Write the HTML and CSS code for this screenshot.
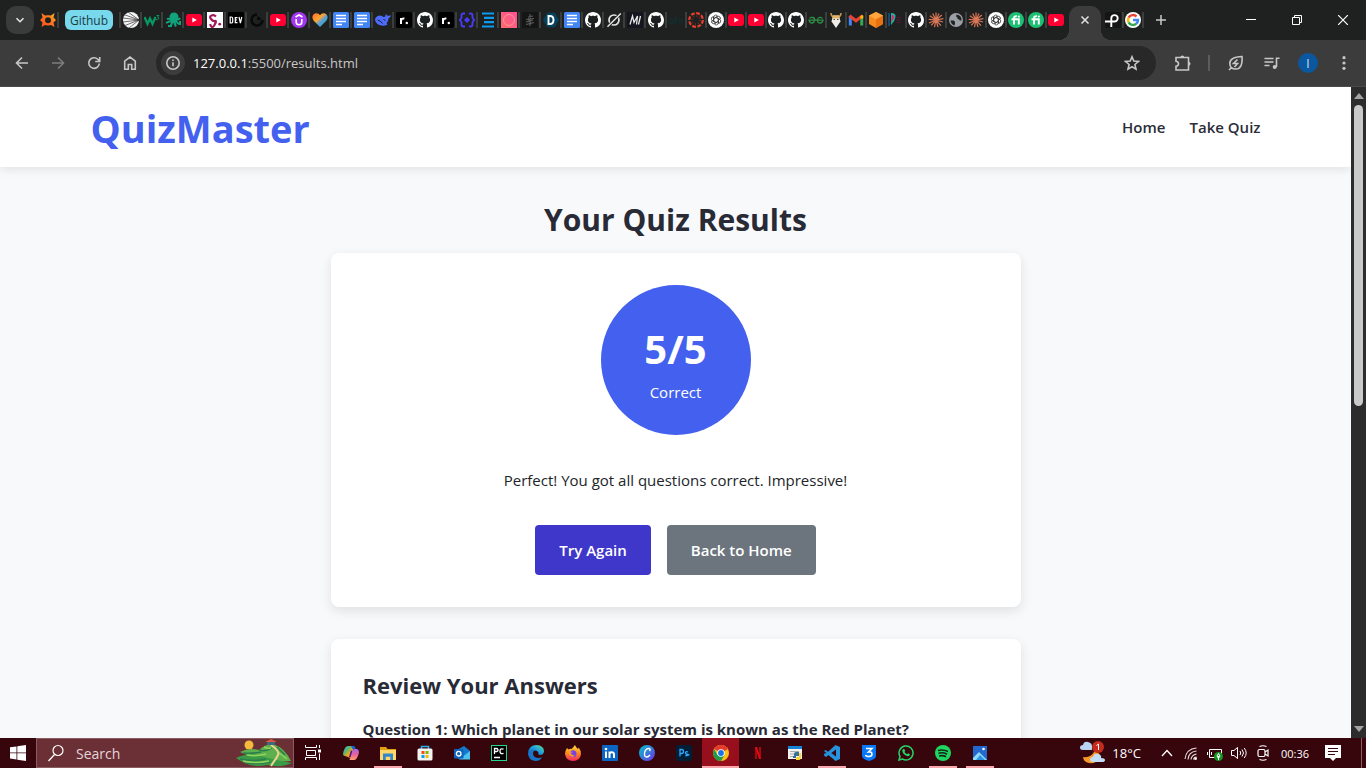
FILE: index.html
```
<!DOCTYPE html>
<html lang="en">
<head>
<meta charset="utf-8">
<title>QuizMaster - Results</title>
<link rel="stylesheet" href="styles.css">
</head>
<body>
<svg class="defs" aria-hidden="true">
  <defs>
    <linearGradient id="rainbow" x1="0" x2="1" y1="0" y2="1"><stop offset="0" stop-color="#2fa8ee"/><stop offset=".35" stop-color="#5bb86a"/><stop offset=".6" stop-color="#f7a51c"/><stop offset="1" stop-color="#ef4c7a"/></linearGradient>
    <linearGradient id="copilotg" x1="0" x2="0" y1="0" y2="1"><stop offset="0" stop-color="#a06bea"/><stop offset=".5" stop-color="#e8609c"/><stop offset="1" stop-color="#ffa06b"/></linearGradient>
    <linearGradient id="heartg" x1="0" x2="1" y1="0" y2="1"><stop offset="0" stop-color="#ff6a2b"/><stop offset=".4" stop-color="#ffa52e"/><stop offset=".6" stop-color="#4e9fe0"/><stop offset="1" stop-color="#3fae6a"/></linearGradient>
    <linearGradient id="edgeg" x1="0" x2="1" y1="1" y2="0"><stop offset="0" stop-color="#0c59a4"/><stop offset=".5" stop-color="#1b9de2"/><stop offset="1" stop-color="#66e08a"/></linearGradient>
    <linearGradient id="fireg" x1="0" x2="0" y1="0" y2="1"><stop offset="0" stop-color="#ffe23c"/><stop offset=".5" stop-color="#ff8a1e"/><stop offset="1" stop-color="#f5255f"/></linearGradient>
    <linearGradient id="canvag" x1="0" x2="1" y1="0" y2="1"><stop offset="0" stop-color="#00c4cc"/><stop offset="1" stop-color="#7031e6"/></linearGradient>
    <linearGradient id="pinkg" x1="1" x2="0" y1="0" y2="1"><stop offset="0" stop-color="#ff4f9a"/><stop offset="1" stop-color="#ff6b6b"/></linearGradient>
    <linearGradient id="sung" x1="0" x2="1" y1="1" y2="0"><stop offset="0" stop-color="#ff4a1c"/><stop offset=".6" stop-color="#ff7a1f"/><stop offset="1" stop-color="#ffc220"/></linearGradient>
  </defs>
  <symbol id="gh" viewBox="0 0 16 16"><circle cx="8" cy="8" r="7.4" fill="#1c1f1f"/><path fill="#fff" d="M8 0C3.58 0 0 3.58 0 8c0 3.54 2.29 6.53 5.47 7.59.4.07.55-.17.55-.38 0-.19-.01-.82-.01-1.49-2.01.37-2.53-.49-2.69-.94-.09-.23-.48-.94-.82-1.13-.28-.15-.68-.52-.01-.53.63-.01 1.08.58 1.23.82.72 1.21 1.87.87 2.33.66.07-.52.28-.87.51-1.07-1.78-.2-3.64-.89-3.64-3.95 0-.87.31-1.59.82-2.15-.08-.2-.36-1.02.08-2.12 0 0 .67-.21 2.2.82.64-.18 1.32-.27 2-.27s1.36.09 2 .27c1.53-1.04 2.2-.82 2.2-.82.44 1.1.16 1.92.08 2.12.51.56.82 1.27.82 2.15 0 3.07-1.87 3.75-3.65 3.95.29.25.54.73.54 1.48 0 1.07-.01 1.93-.01 2.2 0 .21.15.46.55.38A8.01 8.01 0 0 0 16 8c0-4.42-3.58-8-8-8z"/></symbol>
  <symbol id="yt" viewBox="0 0 16 16"><rect y="2" width="16" height="12" rx="3" fill="#ff0033"/><path d="M6.3 5.5v5L10.8 8z" fill="#fff"/></symbol>
  <symbol id="docs" viewBox="0 0 16 16"><rect width="16" height="16" rx="1.6" fill="#4285f4"/><path d="M3 3.500h10M3 6.500h10M3 9.500h10M3 12.500h6" stroke="#fff" stroke-width="1.5"/></symbol>
  <symbol id="gpt" viewBox="0 0 16 16"><circle cx="8" cy="8" r="8" fill="#fff"/><g fill="none" stroke="#333" stroke-width=".8"><path id="petal" d="M5.800 9.300V5.200a2 2 0 0 1 3.800-1l-3.200 1.900"/><use href="#petal" transform="rotate(60 8 8)"/><use href="#petal" transform="rotate(120 8 8)"/><use href="#petal" transform="rotate(180 8 8)"/><use href="#petal" transform="rotate(240 8 8)"/><use href="#petal" transform="rotate(300 8 8)"/></g></symbol>
  <symbol id="claude" viewBox="0 0 16 16"><path d="M8 8V.6M8 8l3-6.5M8 8l5.8-5M8 8l7.4-1.4M8 8l7 2M8 8l5 5.6M8 8l2 7M8 8l-1.5 7.2M8 8l-4.7 5.4M8 8l-7 3M8 8L.7 7.4M8 8L1.8 3.8M8 8L4.6 1.4" stroke="#d97757" stroke-width="1.200"/></symbol>
  <symbol id="fi" viewBox="0 0 16 16"><circle cx="8" cy="8" r="8" fill="#1dbf73"/><path d="M3.500 7.200h7.300V12.500M6 12.500V6Q6 4 8.800 4.300" fill="none" stroke="#fff" stroke-width="1.900"/><circle cx="10.800" cy="4.600" r="1.100" fill="#fff"/></symbol>
  <symbol id="rdot" viewBox="0 0 16 16"><rect width="16" height="16" rx="2" fill="#000"/><path d="M5 12V6M5 8.5Q5.6 6.3 8.4 6.6" fill="none" stroke="#fff" stroke-width="2"/><circle cx="10.8" cy="11" r="1.2" fill="#fff"/></symbol>
</svg>

<header class="browser">
  <div class="tabstrip">
    <button class="tab-search" aria-label="Search tabs"><svg width="10" height="10" viewBox="0 0 10 10"><path d="M1.500 3.200L5 6.700l3.500-3.500" fill="none" stroke="#e3e3e3" stroke-width="1.600"/></svg></button>
    <button class="tab first" aria-label="Tab"><svg viewBox="0 0 16 16"><path d="M8 3.200l3 .2L14.500 1l-1 4.500L16 8l-2.500 2.500 1 4.500-3.500-2-3 .5-3 -.5-3.500 2 1-4.500L0 8l2.500-2.500L1.500 1 5 3.400z" fill="url(#sung)"/><circle cx="8" cy="8.200" r="3" fill="#1f2121"/></svg></button>
    <button class="group">Github</button>
    <span class="sep"></span>
    <button class="tab" aria-label="Tab"><svg viewBox="0 0 16 16"><circle cx="8" cy="8" r="8" fill="#f4f4f4"/><path d="M16 8L1 2.500M16 8L0 6M16 8L0 10M16 8L2 13.500M16 8L5 0M16 8L6 16" stroke="#333" stroke-width=".7"/></svg></button>
    <button class="tab" aria-label="Tab"><svg viewBox="0 0 16 16"><path d="M.5 5l3 7L6 6.500 8.500 12l3-7" fill="none" stroke="#059862" stroke-width="2.300"/><path d="M12.500 3.500h2.500l-1.500 1.500q2 .5 1 2t-2.500.5" fill="none" stroke="#059862"/></svg></button>
    <button class="tab" aria-label="Tab"><svg viewBox="0 0 16 16"><circle cx="9" cy="5" r="4.500" fill="#12a37c"/><path d="M7 8Q4 6 2 7M8 9Q4 9 1 11M9 9Q6 11 6 14H3M10 8Q9 12 11 14.500M11 8q1 4 4 4V9M12 7q2 1 3-1" fill="none" stroke="#12a37c" stroke-width="2"/></svg></button>
    <button class="tab" aria-label="YouTube"><svg><use href="#yt"/></svg></button>
    <button class="tab" aria-label="Tab"><svg viewBox="0 0 16 16"><rect width="16" height="16" fill="#fff"/><path d="M9 4.500Q7 2.500 4.500 3.500T4 7t4 2-.5 4-4.500-.8" fill="none" stroke="#a2185b" stroke-width="2.200"/><circle cx="12.700" cy="12.200" r="1.400" fill="#a2185b"/></svg></button>
    <button class="tab" aria-label="DEV"><svg viewBox="0 0 16 16"><rect width="16" height="16" rx="1.500" fill="#000"/><path d="M2.200 5v6h1q1.500 0 1.500-1.500v-3Q4.700 5 3.200 5zM9.500 5.600H7.300v5h2.200M7.300 8h1.800M11 5l1.400 6L13.800 5" fill="none" stroke="#fff" stroke-width="1.200"/></svg></button>
    <button class="tab" aria-label="Tab"><svg viewBox="0 0 16 16"><path d="M8 2.500a5.500 5.500 0 1 0 5.500 5.500" fill="none" stroke="#080909" stroke-width="2.600"/><path d="M8 8V4.500q3.500 0 4 3.500z" fill="#080909"/></svg></button>
    <button class="tab" aria-label="YouTube"><svg><use href="#yt"/></svg></button>
    <button class="tab" aria-label="Tab"><svg viewBox="0 0 16 16"><circle cx="8" cy="8" r="8" fill="#a435f0"/><path d="M5.200 7v3q0 2.700 2.800 2.700t2.800-2.700V7M4.500 5L8 3l3.500 2" fill="none" stroke="#fff" stroke-width="1.600"/></svg></button>
    <button class="tab" aria-label="Tab"><svg viewBox="0 0 16 16"><path d="M8 15L1.500 8.500C-1 5 1 1.200 4.300 1.200Q6.800 1.200 8 3.300 9.200 1.200 11.700 1.200C15 1.200 17 5 14.500 8.500z" fill="url(#heartg)"/></svg></button>
    <button class="tab" aria-label="Docs"><svg><use href="#docs"/></svg></button>
    <button class="tab" aria-label="Docs"><svg><use href="#docs"/></svg></button>
    <button class="tab" aria-label="Tab"><svg viewBox="0 0 16 16"><path d="M0 7q1.500-3.500 5-3.500 2 0 3.500 1.500l2-.5Q9.800 3 11 2q.5 1.500 2 1.800T16 3Q15.500 6 13.500 6.500q0 3-2 4.500l1 1.500q-3.500 2-7.500.8Q0 11.500 0 7z" fill="#4d6bfe"/><path d="M2.500 8q3 .3 5 3.500M8.500 7.500l2 1" stroke="#1f2020" fill="none"/></svg></button>
    <button class="tab" aria-label="Tab"><svg><use href="#rdot"/></svg></button>
    <button class="tab" aria-label="GitHub"><svg><use href="#gh"/></svg></button>
    <button class="tab" aria-label="Tab"><svg><use href="#rdot"/></svg></button>
    <button class="tab" aria-label="Tab"><svg viewBox="0 0 16 16"><path d="M6 1.500H4.500Q2.500 1.500 2.500 3.500V6L.8 8l1.700 2v2.500q0 2 2 2H6M10 1.500h1.500q2 0 2 2V6l1.700 2-1.700 2v2.500q0 2-2 2H10" fill="none" stroke="#4a3aff" stroke-width="1.800"/><path d="M8 5l3 3-3 3-3-3z" fill="#4a3aff"/></svg></button>
    <button class="tab" aria-label="Tab"><svg viewBox="0 0 16 16"><path d="M2 1.500h12M4 5.800h10M4 10.200h10M2 14.500h12" stroke="#0c9bf0" stroke-width="2.200"/></svg></button>
    <button class="tab" aria-label="Tab"><svg viewBox="0 0 16 16"><rect width="16" height="16" fill="url(#pinkg)"/><circle cx="8" cy="8" r="5.500" fill="none" stroke="#ff9a94" stroke-width="1"/></svg></button>
    <button class="tab" aria-label="Tab"><svg viewBox="0 0 16 16"><rect width="16" height="16" fill="#151515"/><path d="M8 2v12M6 5l5-1M4 7.500l8-1M4 10l7-2M4 12.500l8-2M6 6l3 6" stroke="#5e5e5e" stroke-width="1.100"/></svg></button>
    <button class="tab" aria-label="Tab"><svg viewBox="0 0 16 16"><path d="M4 .8h8L16 8l-4 7.200H4L0 8z" fill="#05405c"/><path d="M5.500 4v8h1.500q3.500 0 3.500-4T7 4z" fill="none" stroke="#fff" stroke-width="1.900"/></svg></button>
    <button class="tab" aria-label="Docs"><svg><use href="#docs"/></svg></button>
    <button class="tab" aria-label="GitHub"><svg><use href="#gh"/></svg></button>
    <button class="tab" aria-label="Tab"><svg viewBox="0 0 16 16"><circle cx="8" cy="8" r="5" fill="none" stroke="#e4e4e4" stroke-width="1.700"/><path d="M2 14.500L14 2" stroke="#1f2121" stroke-width="3"/><path d="M1.500 14.800L14.800 1.500" stroke="#e4e4e4" stroke-width="1.500"/></svg></button>
    <button class="tab" aria-label="Tab"><svg viewBox="0 0 16 16"><rect width="16" height="16" rx="1" fill="#15151f"/><path d="M3 12.500L5.500 4 7 10.500 10.500 4l-1 8.500M11.500 12.500L13.500 4" fill="none" stroke="#e8e8e8" stroke-width="1.300"/></svg></button>
    <button class="tab" aria-label="GitHub"><svg><use href="#gh"/></svg></button>
    <button class="tab narrow" aria-label="Tab"><svg viewBox="0 0 16 16"><circle cx="3.200" cy="9" r="2.200" fill="none" stroke="#162c2c" stroke-width="1.600"/><path d="M5.800 6.500V12M8.200 3.500V12M10.500 6.500l4.500 5M15 6.500l-4.500 5" stroke="#162c2c" stroke-width="1.600"/></svg></button>
    <button class="tab narrow" aria-label="Tab"><svg viewBox="0 0 16 16"><circle cx="8" cy="8" r="6.800" fill="none" stroke="#e8402c" stroke-width="2.200" stroke-dasharray="3.800 1.540"/><circle cx="8" cy="8" r="4" fill="none" stroke="#e8402c" stroke-width=".9" stroke-dasharray=".9 2.240"/></svg></button>
    <button class="tab narrow" aria-label="ChatGPT"><svg><use href="#gpt"/></svg></button>
    <button class="tab narrow" aria-label="YouTube"><svg><use href="#yt"/></svg></button>
    <button class="tab narrow" aria-label="YouTube"><svg><use href="#yt"/></svg></button>
    <button class="tab narrow" aria-label="GitHub"><svg><use href="#gh"/></svg></button>
    <button class="tab narrow" aria-label="GitHub"><svg><use href="#gh"/></svg></button>
    <button class="tab narrow" aria-label="Tab"><svg viewBox="0 0 16 16"><path d="M1.500 6.200Q3 5 5 5.500T6.500 8.500 4 11 1 8.200h14q-.5 2.800-3 2.800T9.500 8.500 11 5.500t3.500.7" fill="none" stroke="#2f8d46" stroke-width="1.300"/></svg></button>
    <button class="tab narrow" aria-label="Tab"><svg viewBox="0 0 16 16"><path d="M3 1q0 3 2.500 4M13 1q0 3-2.500 4" fill="none" stroke="#c98f3f" stroke-width="1.600"/><path d="M5 3.500h6l1.500 6L8 16 3.500 9.500z" fill="#f0ece6"/><path d="M5 3.500h6v3H5z" fill="#e7b35e"/><path d="M5.500 7.500h1.500M9 7.500h1.500" stroke="#444"/></svg></button>
    <button class="tab narrow" aria-label="Gmail"><svg viewBox="0 0 16 16"><path d="M2.300 13.500V4" stroke="#4285f4" stroke-width="3"/><path d="M13.700 13.500V4" stroke="#34a853" stroke-width="3"/><path d="M1.500 3.800L8 8.800l6.500-5" fill="none" stroke="#ea4335" stroke-width="3"/><path d="M12.200 4.500L14 3l1.200.5V6.500h-3z" fill="#fbbc04"/></svg></button>
    <button class="tab narrow" aria-label="Tab"><svg viewBox="0 0 16 16"><path d="M8 0l7 3.500v8.500L8 16l-7-4V3.500z" fill="#f58a1f"/><path d="M8 0l7 3.500L8 7.500 1 3.500z" fill="#ffa63d"/><path d="M8 7.500l7-4v8.500L8 16z" fill="#e8700f"/></svg></button>
    <button class="tab narrow" aria-label="Tab"><svg viewBox="0 0 16 16"><path d="M1 1v13" stroke="#17496e" stroke-width="2"/><path d="M3 1q5 0 4.500 4T3 13z" fill="#14b8a6"/><path d="M4 2l2.500 3L3 11z" fill="#d92d6a"/><path d="M8.500 5.500h4.500M8 8h5M8.500 10.500h4.500" stroke="#5a1734"/></svg></button>
    <button class="tab narrow" aria-label="GitHub"><svg><use href="#gh"/></svg></button>
    <button class="tab narrow" aria-label="Claude"><svg><use href="#claude"/></svg></button>
    <button class="tab narrow" aria-label="Tab"><svg viewBox="0 0 16 16"><circle cx="8" cy="8" r="7" fill="#9aa0a6"/><path d="M2.500 8.500h3Q7.500 9 7 11.500l-.5 2Q3 12.500 2.500 8.500zM8.500 2.500Q7.500 5 9.500 5.500v1.500q2.500 0 2 1.500h2Q14 3.500 8.500 2.500z" fill="#202222"/></svg></button>
    <button class="tab narrow" aria-label="Claude"><svg><use href="#claude"/></svg></button>
    <button class="tab narrow" aria-label="ChatGPT"><svg><use href="#gpt"/></svg></button>
    <button class="tab narrow" aria-label="Fiverr"><svg><use href="#fi"/></svg></button>
    <button class="tab narrow" aria-label="Fiverr"><svg><use href="#fi"/></svg></button>
    <button class="tab narrow last" aria-label="YouTube"><svg><use href="#yt"/></svg></button>
    <button class="tab-active" aria-label="Close tab"><svg width="10" height="10" viewBox="0 0 10 10"><path d="M1.500 1.500l7 7M8.500 1.500l-7 7" stroke="#e3e3e3" stroke-width="1.500"/></svg></button>
    <button class="tab narrow" aria-label="Tab"><svg viewBox="0 0 16 16"><rect width="16" height="16" rx="2" fill="#151515"/><path d="M0 9.500h9.500a3.200 3.200 0 1 0-3.200-3.200V15" fill="none" stroke="#fff" stroke-width="1.900"/></svg></button>
    <button class="tab narrow" aria-label="Google"><svg viewBox="0 0 16 16"><circle cx="8" cy="8" r="8" fill="#fff"/><g fill="none" stroke-width="2.500"><path d="M11.500 4.500A5 5 0 0 0 3.600 5.700" stroke="#ea4335"/><path d="M3.600 5.700a5 5 0 0 0 0 4.600" stroke="#fbbc05"/><path d="M3.600 10.300a5 5 0 0 0 7.600 1.500" stroke="#34a853"/><path d="M11.200 11.800A5 5 0 0 0 13 8H8" stroke="#4285f4"/></g></svg></button>
    <button class="new-tab" aria-label="New tab"><svg width="12" height="12" viewBox="0 0 12 12"><path d="M6 1v10M1 6h10" stroke="#c7c7c7" stroke-width="1.500"/></svg></button>
    <div class="window-controls">
      <button aria-label="Minimize"><svg width="10" height="10"><path d="M0 4.500h10" stroke="#fff"/></svg></button>
      <button aria-label="Restore"><svg width="10" height="10"><path d="M.5 2.500h7v7h-7zM2.500 2.500v-2h7v7h-2" fill="none" stroke="#fff"/></svg></button>
      <button aria-label="Close"><svg width="10" height="10"><path d="M0 0l10 10M10 0L0 10" stroke="#fff" stroke-width="1.200"/></svg></button>
    </div>
  </div>

  <div class="toolbar">
    <div class="nav-buttons">
      <button aria-label="Back"><svg viewBox="0 0 16 16"><path d="M14 8H3M8 2.500L2.500 8 8 13.500" /></svg></button>
      <button class="dim" aria-label="Forward"><svg viewBox="0 0 16 16"><path d="M2 8h11M8 2.500L13.500 8 8 13.500"/></svg></button>
      <button aria-label="Reload"><svg viewBox="0 0 16 16"><path d="M13.300 8.500A5.300 5.300 0 1 1 11.800 4.300L13.500 6M13.700 2v4.500H9.200"/></svg></button>
      <button aria-label="Home"><svg viewBox="0 0 16 16"><path d="M2.700 6.200L8 2l5.300 4.200v8H9.700V9.500H6.300v4.700H2.700z"/></svg></button>
    </div>
    <div class="omnibox">
      <button class="site-info" aria-label="Site information"><svg viewBox="0 0 16 16"><circle cx="8" cy="8" r="6.200"/><path d="M8 7.300v4M8 4.500v1.500"/></svg></button>
      <div class="url" role="textbox" aria-label="Address bar"><span class="host">127.0.0.1</span>:5500/results.html</div>
      <button class="bookmark" aria-label="Bookmark"><svg viewBox="0 0 16 16"><path d="M8 1.800l1.800 4.300 4.700.4-3.600 3 1.100 4.600L8 11.700l-4 2.400 1.100-4.600-3.600-3 4.700-.4z"/></svg></button>
    </div>
    <div class="actions">
      <button class="extensions" aria-label="Extensions"><svg viewBox="0 0 18 18"><path d="M2 3.500H14.500V16H2v-3.700Q4.500 12 4.500 9.800T2 7.200z"/><path class="solid" d="M6.300 3.500a2 2 0 0 1 4 0zM14.500 7.800a2 2 0 0 1 0 4z"/></svg></button>
      <span class="divider"></span>
      <button aria-label="Energy saver"><svg viewBox="0 0 16 16"><path d="M14 1.500Q14.800 14 8 14 1.800 14 1.800 8.500 1.800 2 14 1.500zM3.500 12.500L1 15M9.500 4.500L5.500 8.500h4L6.500 12"/></svg></button>
      <button aria-label="Media controls"><svg viewBox="0 0 16 16"><path d="M.5 3.500h9M.5 7h9M.5 10.500h5M12.500 12V3.200h3"/><circle cx="10.700" cy="12" r="2" class="solid"/></svg></button>
      <button class="profile" aria-label="Profile">I</button>
      <button aria-label="Menu"><svg viewBox="0 0 16 16"><g class="solid"><circle cx="8" cy="2.700" r="1.600"/><circle cx="8" cy="8" r="1.600"/><circle cx="8" cy="13.300" r="1.600"/></g></svg></button>
    </div>
  </div>
</header>

<div class="viewport">
  <div class="page">
    <header class="site-header">
      <div class="container">
        <h1 class="logo">QuizMaster</h1>
        <nav><a href="#home">Home</a><a href="#quiz">Take Quiz</a></nav>
      </div>
    </header>
    <main class="results">
      <h2>Your Quiz Results</h2>
      <section class="card summary">
        <div class="score"><span class="score-value">5/5</span><span>Correct</span></div>
        <p>Perfect! You got all questions correct. Impressive!</p>
        <div class="buttons"><a class="btn primary" href="#quiz">Try Again</a><a class="btn secondary" href="#home">Back to Home</a></div>
      </section>
      <section class="card review">
        <h3>Review Your Answers</h3>
        <p class="question">Question 1: Which planet in our solar system is known as the Red Planet?</p>
      </section>
    </main>
  </div>
  <div class="scrollbar" aria-hidden="true">
    <svg width="10" height="6"><path d="M0 6l5-6 5 6z" fill="#a3a3a3"/></svg>
    <div class="track"><div class="thumb"></div></div>
    <svg width="10" height="6"><path d="M0 0l5 6 5-6z" fill="#a3a3a3"/></svg>
  </div>
</div>

<footer class="taskbar">
  <button class="start" aria-label="Start"><svg width="16" height="16" viewBox="0 0 16 16"><path d="M0 2.300l6.500-.9v6.100H0zM7.300 1.300L16 0v7.500H7.300zM0 8.300h6.500v6.100L0 13.600zM7.300 8.300H16V16l-8.700-1.300z" fill="#fff"/></svg></button>
  <label class="search">
    <svg width="18" height="18" viewBox="0 0 18 18"><circle cx="11" cy="6.500" r="5" fill="none" stroke="#fff" stroke-width="1.200"/><path d="M7.500 10.500L1.500 17" stroke="#fff" stroke-width="1.300"/></svg>
    <input type="text" placeholder="Search" aria-label="Search">
    <svg class="hill" width="58" height="28" viewBox="0 0 58 28"><circle cx="14" cy="6" r="4.500" fill="#f5b93c"/><path d="M5 13Q14 8 24 11 30 5 38 5 50 9 56 22L30 24z" fill="#5eb04c"/><path d="M1 19Q12 13 26 17T57 24Q47 29 32 26 16 30 1 19z" fill="#3a9a45"/><path d="M8 14q9 1 18-1M24 11q7 2 13-2M5 20q13 3 26 0M42 8q4 4 8 8M11 24q12 2 24-1" fill="none" stroke="#2b7d4f" stroke-width="1.500"/><path d="M12 16q9 2 19-1M29 8q4 2 7 1M8 22q13 3 26 0M43 13q5 4 9 7" fill="none" stroke="#8fd45a" stroke-width="1.500"/><path d="M36 6q9 6 7 10t-3 5-4 6" fill="none" stroke="#f1d194" stroke-width="2"/><path d="M32 6h8V3h-8z" fill="#3b6b82"/><path d="M30 3l6-3 6 3z" fill="#d9573c"/></svg>
  </label>
  <button class="taskview" aria-label="Task view"><svg width="16" height="16" viewBox="0 0 16 16" fill="none" stroke="#fff"><path d="M.5 0v2.500h11V0M.5 15v-2.500h11V15M1.500 5.500h9v5h-9zM14.500 0v3M14.500 8.500V15"/><path d="M13 4.500h3v3h-3z" fill="#fff" stroke="none"/></svg></button>
  <div class="apps">
    <button aria-label="Copilot"><svg viewBox="0 0 16 16"><path d="M5 1h6L8 12.500Q7.300 14 5 12L2 11Q0 11 0 9 1.500 1 5 1z" fill="url(#rainbow)"/><path d="M11.500 4H14q3 1 1.300 6T11 15H6.500L9 6.500Q9.500 4 11.500 4z" fill="url(#copilotg)"/><path d="M9.200 6.500L7.500 12Q7 13 6 12l2-7z" fill="#4b1680"/><path d="M8 1h3q1.200.5 1.800 3H9.500z" fill="#1763d6"/></svg></button>
    <button class="open" aria-label="File Explorer"><svg viewBox="0 0 16 16"><path d="M0 2h6l1.500 2H16v11H0z" fill="#e3a112"/><path d="M0 5h16v10H0z" fill="#ffd766"/><path d="M3 8.500h10V15h-2.800v-3.300H5.800V15H3z" fill="#3586cf"/></svg></button>
    <button aria-label="Microsoft Store"><svg viewBox="0 0 16 16"><path d="M4.500 4V1.500h7V4" fill="none" stroke="#2cb1f0" stroke-width="1.500"/><rect x=".5" y="3.500" width="15" height="12" rx="1.500" fill="#f3f3f3"/><path d="M4.500 6h3v3h-3z" fill="#f25022"/><path d="M8.500 6h3v3h-3z" fill="#7fba00"/><path d="M4.500 10h3v3h-3z" fill="#00a4ef"/><path d="M8.500 10h3v3h-3z" fill="#ffb900"/></svg></button>
    <button aria-label="Outlook"><svg viewBox="0 0 16 16"><path d="M3 5l7-4 6 5v8H4z" fill="#1578d0"/><path d="M16 6v8.500H5z" fill="#4cc2f1"/><rect y="4" width="9.500" height="9.500" rx="1" fill="#0f64ba"/><circle cx="4.700" cy="8.700" r="2.300" fill="none" stroke="#fff" stroke-width="1.300"/></svg></button>
    <button aria-label="PyCharm"><svg viewBox="0 0 16 16"><rect x=".5" y=".5" width="15" height="15" fill="#000" stroke="#21d789"/><path d="M3.500 9V3.500h2Q7 3.500 7 5T5.500 6.500h-2M12.500 4.200Q9 2.800 9 6.200T12.500 8.300M3 12.500h6" fill="none" stroke="#fff" stroke-width="1.300"/></svg></button>
    <button aria-label="Edge"><svg viewBox="0 0 16 16"><path d="M0 8Q1 0 8.500 0 16 .5 16 6.500 15.500 10 11.500 10q-2-.5-1-2Q10 5.500 7 5.500 3 6 0 8z" fill="url(#edgeg)"/><path d="M0 8q3-4 7-3-3 2-1.500 5.500T14 12.500Q11.500 16 7.500 16 0 15 0 8z" fill="#1874c9"/></svg></button>
    <button aria-label="Firefox"><svg viewBox="0 0 16 16"><path d="M2 3l1.500 1.500Q5 3.500 6.500 4L8 2.500 10 0q.5 2 3 4l.7-1.500Q16 5.500 16 9q-1 7-8 7T0 9q0-3 2-6z" fill="url(#fireg)"/><circle cx="8" cy="8.700" r="3.500" fill="#7542e5"/><path d="M3 6q3-.5 5 1.500H5.500q1 3 4.500 3-3 3-6-1z" fill="#ff9b25"/></svg></button>
    <button aria-label="LinkedIn"><svg viewBox="0 0 16 16"><rect width="16" height="16" rx="1" fill="#0a66c2"/><path d="M4 6.500V13M7.500 13V6.500M7.500 9.500Q7.500 7.300 9.800 7.300T12 9.500V13" fill="none" stroke="#fff" stroke-width="2"/><circle cx="4" cy="4" r="1.300" fill="#fff"/></svg></button>
    <button aria-label="Canva"><svg viewBox="0 0 16 16"><circle cx="8" cy="8" r="8" fill="url(#canvag)"/><path d="M10.500 6q1.500-2-.5-2.500C7 3 5 7 5.500 10s3.500 2.500 5.500 0" fill="none" stroke="#fff" stroke-width="1.400"/></svg></button>
    <button aria-label="Photoshop"><svg viewBox="0 0 16 16"><rect width="16" height="16" rx="2.500" fill="#001e36"/><path d="M4 11.500v-7h1.500q2 0 2 2t-2 2H4M12 7Q9.500 6.200 9.500 7.700T12 9.500t-2.700 1.300" fill="none" stroke="#31a8ff" stroke-width="1.300"/></svg></button>
    <button class="open current" aria-label="Chrome"><svg viewBox="0 0 16 16"><circle cx="8" cy="8" r="8" fill="#fbc116"/><path d="M8 8L1.100 4A8 8 0 0 1 14.900 4z" fill="#e33b2e"/><path d="M1.100 4A8 8 0 0 0 8 16l3.500-6H4.500z" fill="#229a48"/><circle cx="8" cy="8" r="3.800" fill="#fff"/><circle cx="8" cy="8" r="2.900" fill="#1a73e8"/></svg></button>
    <button aria-label="Netflix"><svg viewBox="0 0 16 16"><path d="M6 2v12M10 2v12" stroke="#a90710" stroke-width="2"/><path d="M5 2h2l4 12H9z" fill="#e50914"/></svg></button>
    <button aria-label="Python IDLE"><svg viewBox="0 0 16 16"><path d="M1 1h14v13H1z" fill="#f2f2ee"/><path d="M1 1h14v3H1z" fill="#1683d8"/><path d="M3 6.500h9M3 9h5M3 11.500h3" stroke="#aaa"/><path d="M7 11V9q0-2 2-2h3v4H9v2H6v-2z" fill="#35709f"/><path d="M12 8h2v4q0 3-2 3H9v-3h3z" fill="#ffd43b"/></svg></button>
    <button class="open" aria-label="VS Code"><svg viewBox="0 0 16 16"><path d="M12 1L1 11l-1-1V9l1-1 2 1 9 6 4-2V3z" fill="#1681cf"/><path d="M0 6l1.500-1L12 12V4L2 12 0 10.500 11.500 0 16 2v12l-4.500 2z" fill="#2693dd"/><path d="M12 4.500v7L7.500 8z" fill="#38060d"/></svg></button>
    <button aria-label="App"><svg viewBox="0 0 16 16"><path d="M1 0h14v11q0 3-7 5-7-2-7-5z" fill="#0878f9"/><path d="M5 3.500h6L7.500 7Q11 6.500 11 9t-3 2.500-3.500-1.500" fill="none" stroke="#fff" stroke-width="1.500"/></svg></button>
    <button aria-label="WhatsApp"><svg viewBox="0 0 16 16"><path d="M1 15l1-3.500A7 7 0 1 1 4.500 14z" fill="none" stroke="#25d366" stroke-width="1.500"/><path d="M5 4l1.500.3.700 1.700-.7 1q1 1.500 2.500 2.200l1-1 2 1q-.5 2.300-2.500 2Q4.500 9.500 4.200 5.500z" fill="#25d366"/></svg></button>
    <button class="open" aria-label="Spotify"><svg viewBox="0 0 16 16"><circle cx="8" cy="8" r="8" fill="#1ed760"/><path d="M3 5.500q5-1.500 10 1M3.500 8.300q4.500-1.300 8.500.9M4 11q4-1 7 .7" fill="none" stroke="#17251a" stroke-width="1.600"/></svg></button>
    <button class="open" aria-label="Photos"><svg viewBox="0 0 16 16"><rect x="1" y="1" width="14" height="14" fill="#2368cf"/><path d="M1 13l6-6 8 8H1z" fill="#8edbff"/><path d="M4 15l4-5 5 5z" fill="#2b91e5"/><circle cx="11.500" cy="4" r="1.300" fill="#fff"/></svg></button>
  </div>
  <div class="tray">
    <button class="weather"><svg width="26" height="24" viewBox="0 0 26 24"><path d="M3 16q8 1 11-5 7 0 6 6-6 8-14 4-3-2-3-5z" fill="#f79a25"/><path d="M3 9Q0 9 0 6.500T3 4q1-4 5-3t4 4 0 4z" fill="#b9d3f5"/><path d="M13 21q-3 0-3-2.500t3-2.500q1-4 5-3t3 4q4 0 4 2t-3 2z" fill="#c3dcf7"/><circle cx="18" cy="6" r="6" fill="#c42b1c"/><path d="M16.500 4.500L18.500 3v6" fill="none" stroke="#fff"/></svg><span>18°C</span></button>
    <button class="icon" aria-label="Show hidden icons"><svg width="12" height="8" viewBox="0 0 12 8" fill="none" stroke="#fff" stroke-width="1.300"><path d="M1 7l5-5.500L11 7"/></svg></button>
    <button class="icon" aria-label="Network"><svg viewBox="0 0 16 16" fill="none" stroke="#e9dcdd" stroke-width="1.100"><path d="M2 14Q3 4 13.500 3M5 14.500Q5.500 7 13.500 6M8 14.500Q8.500 10 13.500 9M10.500 14.500Q11 12 13.500 12"/><circle cx="12.500" cy="13.500" r="1" fill="#fff"/></svg></button>
    <button class="icon" aria-label="Battery"><svg viewBox="0 0 16 16"><path d="M2.500 4.500h12v8h-12zM.5 7v3M4.500 7v3" fill="none" stroke="#fff"/><circle cx="11.500" cy="11.500" r="4.500" fill="#159424"/><path d="M11.500 8.500q3 2.500 0 5-3-2.500 0-5zM11.500 11v4" fill="none" stroke="#fff"/></svg></button>
    <button class="icon" aria-label="Volume"><svg viewBox="0 0 16 16" fill="none" stroke="#fff"><path d="M.5 5.500H3L6.500 2.500v11L3 10.500H.5zM9 6q1.500 2 0 4M11 4.500q3 3.500 0 7M13.200 3q4 5 0 10"/></svg></button>
    <button class="icon" aria-label="Camera"><svg viewBox="0 0 16 16" fill="none" stroke="#fff" stroke-width="1.200"><rect x="3" y="4.500" width="7" height="7" rx="1.500"/><path d="M10 7l3-2v6l-3-2M4.500 1.500q3.500-1.500 7 0M4.500 14.500q3.500 1.500 7 0"/></svg></button>
    <span class="clock">00:36</span>
    <button class="notify" aria-label="Notifications"><svg width="16" height="16" viewBox="0 0 16 16"><path d="M0 0h16v13h-5l-3 3-3-3H0z" fill="#fff"/><path d="M3 3.500h10M3 6.500h10M3 9.500h7" stroke="#38060d"/></svg></button>
    <span class="show-desktop"></span>
  </div>
</footer>
</body>
</html>
```

FILE: styles.css
```
* { box-sizing: border-box; }
body {
  margin: 0;
  height: 100vh;
  display: flex;
  flex-direction: column;
  overflow: hidden;
  font-family: "Open Sans", "Noto Sans", sans-serif;
  font-size: 15px;
  color: #212529;
}
button {
  margin: 0;
  padding: 0;
  border: 0;
  background: none;
  color: inherit;
  font: inherit;
  display: flex;
  align-items: center;
  justify-content: center;
  flex: none;
}
svg { display: block; flex: none; }
.defs { position: absolute; width: 0; height: 0; }

/* Browser chrome */
.browser { flex: none; background: #3c3c3c; }
.tabstrip {
  display: flex;
  align-items: center;
  height: 40px;
  padding-left: 6px;
  background: #1f2121;
}
.tab-search { width: 28px; height: 28px; border-radius: 10px; background: #3a3b3b; }
.tab {
  width: 21px;
  height: 16px;
  padding-left: 2px;
  border-right: 2px solid #3c3d3d;
  justify-content: flex-start;
}
.tab svg { width: 16px; height: 16px; }
.tab.first { margin-left: 4px; }
.tab.narrow { width: 20px; padding-left: 1px; }
.tab.last { border-color: transparent; }
.group {
  width: 48px;
  height: 20px;
  margin: 0 6px;
  border-radius: 6px;
  background: #78d9ec;
  color: #1c3a44;
  font-size: 12px;
}
.sep { width: 2px; height: 16px; background: #3c3d3d; }
.tab-active {
  position: relative;
  width: 32px;
  height: 34px;
  margin: 0 3px 0 2px;
  padding-bottom: 6px;
  align-self: flex-end;
  border-radius: 10px 10px 0 0;
  background: #3c3c3c;
}
.tab-active::before,
.tab-active::after {
  content: "";
  position: absolute;
  bottom: 0;
  width: 10px;
  height: 10px;
}
.tab-active::before { right: 100%; background: radial-gradient(circle at 0 0, transparent 10px, #3c3c3c 10px); }
.tab-active::after { left: 100%; background: radial-gradient(circle at 100% 0, transparent 10px, #3c3c3c 10px); }
.new-tab { width: 28px; height: 28px; margin-left: 3px; }
.window-controls { display: flex; margin-left: auto; }
.window-controls button { width: 46px; height: 40px; }

.toolbar {
  display: flex;
  align-items: center;
  height: 47px;
  padding: 0 4px;
  border-bottom: 1px solid #4a4a4a;
}
.toolbar svg { width: 16px; height: 16px; fill: none; stroke: #c7c7c7; stroke-width: 1.6; }
.toolbar .solid { fill: #c7c7c7; stroke: none; }
.toolbar .dim svg { stroke: #7d7d7d; }
.nav-buttons, .actions { display: flex; align-items: center; flex: none; }
.nav-buttons button, .actions button { width: 36px; height: 34px; }
.omnibox {
  flex: 1;
  display: flex;
  align-items: center;
  height: 34px;
  margin: 0 9px 0 8px;
  padding: 0 12px 0 5px;
  border-radius: 17px;
  background: #282828;
}
.site-info { width: 24px; height: 24px; border-radius: 12px; background: #3c3c3c; }
.url { flex: 1; margin-left: 8px; font-size: 13px; color: #c7c7c7; }
.host { color: #fff; }
.bookmark { width: 24px; height: 24px; }
.toolbar .extensions svg { width: 18px; height: 18px; }
.divider { width: 2px; height: 16px; margin: 0 8px 0 7px; background: #5c5c5c; }
.actions .profile {
  width: 20px;
  height: 20px;
  margin: 0 8px;
  border-radius: 10px;
  background: #0b57a0;
  color: #cfe0f0;
  font-size: 12px;
}

/* Page */
.viewport { flex: 1; display: flex; min-height: 0; }
.page { flex: 1; overflow: hidden; background: #f8f9fb; line-height: 26px; }
.site-header { position: relative; background: #fff; box-shadow: 0 2px 10px rgba(0, 0, 0, 0.1); }
.container {
  display: flex;
  align-items: center;
  justify-content: space-between;
  max-width: 1170px;
  height: 80px;
  margin: 0 auto;
}
.logo { margin: 0; padding-top: 2px; font-size: 38px; font-weight: 700; color: #4361ee; }
nav { display: flex; gap: 24px; }
nav a { color: #2b2d38; font-weight: 600; text-decoration: none; }
.results { max-width: 690px; margin: 0 auto; padding-top: 32px; }
h2, h3 { margin: 0 0 16px; font-weight: 700; color: #282a36; }
h2 { margin-bottom: 12px; font-size: 30px; line-height: 42px; text-align: center; }
h3 { font-size: 22px; line-height: 29px; }
.card {
  margin-bottom: 32px;
  padding: 32px;
  border-radius: 8px;
  background: #fff;
  box-shadow: 0 4px 12px rgba(0, 0, 0, 0.1);
}
.card p { margin: 0; }
.summary { display: flex; flex-direction: column; align-items: center; gap: 32px; text-align: center; }
.score {
  display: flex;
  flex-direction: column;
  align-items: center;
  justify-content: center;
  width: 150px;
  height: 150px;
  padding-top: 4px;
  border-radius: 50%;
  background: #4361ee;
  color: #fff;
}
.score-value { font-size: 40px; font-weight: 700; line-height: 60px; }
.buttons { display: flex; gap: 16px; }
.btn {
  padding: 12px 24px;
  border-radius: 4px;
  color: #fff;
  font-weight: 600;
  text-decoration: none;
}
.primary { background: #3f37c9; }
.secondary { background: #6c757d; }
.question { font-weight: 700; color: #282a36; }

.scrollbar {
  flex: none;
  width: 15px;
  display: flex;
  flex-direction: column;
  align-items: center;
  padding: 6px 0;
  background: #2c2c2c;
}
.track { flex: 1; width: 9px; margin: 6px 0; }
.thumb { height: 49%; border-radius: 5px; background: #c9c9c9; }

/* Taskbar */
.taskbar {
  flex: none;
  display: flex;
  align-items: stretch;
  height: 30px;
  background: #37060d;
  color: #fff;
}
.start { width: 36px; }
.search {
  display: flex;
  align-items: center;
  flex: none;
  width: 258px;
  padding-left: 10px;
  border: 1px solid #8b5d62;
  background: #6b3036;
}
.search input {
  flex: 1;
  min-width: 0;
  margin-left: 11px;
  padding: 0;
  border: 0;
  background: none;
  color: #fff;
  font: inherit;
  font-size: 14px;
}
.search input::placeholder { color: #e4d5d6; opacity: 1; }
.taskview { width: 38px; }
.apps { display: flex; }
.apps button { width: 37px; border-bottom: 2px solid transparent; padding-top: 2px; }
.apps svg { width: 16px; height: 16px; }
.apps .open { background: linear-gradient(#f9a6ad, #f9a6ad) center bottom / 28px 2px no-repeat border-box; }
.apps .current { background-color: #970f1d; background-size: 37px 2px; }
.tray { display: flex; align-items: center; margin-left: auto; }
.weather { gap: 6px; margin-right: 14px; font-size: 13px; }
.icon { width: 24px; height: 30px; }
.icon svg { width: 16px; }
.clock { margin: 0 16px 0 6px; font-size: 11px; }
.notify { margin-right: 20px; }
.show-desktop { width: 1px; height: 30px; margin-right: 4px; background: #8b5d62; }
```
